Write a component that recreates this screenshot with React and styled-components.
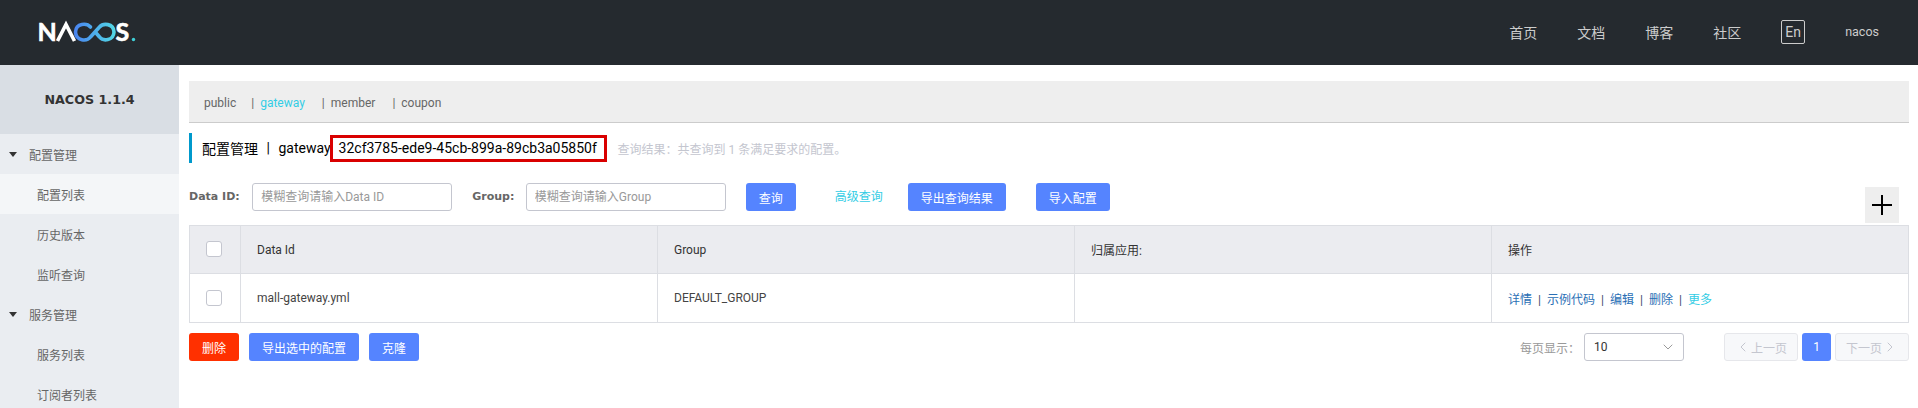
import React from 'react'
import styled, { createGlobalStyle } from 'styled-components'
import { ChevronDown, ChevronLeft, ChevronRight } from 'lucide-react'

const GlobalStyle = createGlobalStyle`
    html, body {
        margin: 0;
        padding: 0;
        height: 100%;
        overflow: hidden;
        background: #fff;
        font-family: Roboto, "Noto Sans CJK SC", sans-serif;
        font-size: 12px;
        color: #333;
    }
`

const Page = styled.div`
    display: flex;
    flex-direction: column;
    height: 100vh;
    overflow: hidden;
`

const Header = styled.header`
    display: flex;
    align-items: center;
    justify-content: space-between;
    flex: none;
    box-sizing: border-box;
    height: 65px;
    padding: 0 39px 2px 36px;
    background: #252a2f;
`

const Nav = styled.nav`
    display: flex;
    align-items: center;
    gap: 40px;
    color: #ccc;
    font-size: 14px;
`

const LangBox = styled.span`
    display: flex;
    align-items: center;
    justify-content: center;
    box-sizing: border-box;
    width: 24px;
    height: 24px;
    border: 1px solid #ccc;
    border-radius: 2px;
`

const UserName = styled.span`
    font-size: 12.5px;
`

const Body = styled.div`
    display: flex;
    flex: 1;
    min-height: 0;
`

const Sidebar = styled.aside`
    flex: none;
    width: 179px;
    background: #eaedf1;
`

const SideTitle = styled.div`
    display: flex;
    align-items: center;
    justify-content: center;
    height: 69px;
    background: #d9dee4;
    color: #333;
    font-family: "DejaVu Sans", sans-serif;
    font-size: 12.7px;
    font-weight: bold;
`

const SideItem = styled.div`
    display: flex;
    align-items: center;
    height: 40px;
    padding-left: ${(props) => (props.$group ? '9px' : '37px')};
    background: ${(props) => (props.$active ? '#f4f6f8' : 'transparent')};
    color: #666;
`

const Caret = styled.span`
    width: 0;
    height: 0;
    margin-right: 12px;
    border-left: 4.5px solid transparent;
    border-right: 4.5px solid transparent;
    border-top: 5px solid #333;
`

const Main = styled.main`
    flex: 1;
    min-width: 0;
    padding: 16px 9px 0 10px;
`

const TabBar = styled.div`
    display: flex;
    align-items: center;
    box-sizing: border-box;
    height: 42px;
    padding: 3px 0 0 15px;
    background: #eee;
    border-bottom: 1px solid #ccc;
    color: #666;
`

const Tab = styled.span`
    margin-right: ${(props) => props.$gap}px;
    color: ${(props) => (props.$active ? '#33cde5' : '#666')};
`

const TabSep = styled.span`
    margin-right: 6px;
    color: #666;
`

const TitleBar = styled.div`
    display: flex;
    align-items: center;
    box-sizing: border-box;
    height: 30px;
    margin-top: 10px;
    padding-left: 10px;
    border-left: 3px solid #09c;
    color: #000;
    font-size: 14px;
`

const TitleSep = styled.span`
    margin: 0 8.5px;
`

const RedBox = styled.span`
    display: flex;
    align-items: center;
    box-sizing: border-box;
    width: 277px;
    height: 27px;
    margin-left: -1px;
    padding-left: 6px;
    border: 3px solid #d90000;
`

const TitleNote = styled.span`
    margin-left: 11px;
    color: #c4c6cf;
    font-size: 12px;
`

const SearchRow = styled.div`
    display: flex;
    align-items: flex-start;
    height: 42px;
    margin-top: 20px;
    padding-right: 10px;
`

const FieldLabel = styled.label`
    margin-right: ${(props) => props.$gap}px;
    line-height: 28px;
    color: #666;
    font-family: "DejaVu Sans", sans-serif;
    font-weight: bold;
    font-size: 11px;
`

const SearchInput = styled.input`
    box-sizing: border-box;
    width: 200px;
    height: 28px;
    margin-right: 20px;
    padding: 0 8px;
    border: 1px solid #c4c6cf;
    border-radius: 3px;
    font: inherit;
    &::placeholder {
        color: #999;
        opacity: 1;
    }
`

const Button = styled.button`
    flex: none;
    width: ${(props) => props.$width}px;
    height: 28px;
    margin-right: ${(props) => props.$gap || 0}px;
    padding: 0;
    border: 0;
    border-radius: 3px;
    background: ${(props) => (props.$danger ? '#ff3000' : '#5584ff')};
    color: #fff;
    font: inherit;
`

const AdvancedLink = styled.a`
    margin: 0 25px 0 39px;
    line-height: 28px;
    color: #33cde5;
`

const PlusButton = styled.div`
    display: flex;
    align-items: center;
    justify-content: center;
    width: 34px;
    height: 36px;
    margin: 4px 0 0 auto;
    background: #eee;
`

const Table = styled.table`
    width: 100%;
    table-layout: fixed;
    border-collapse: collapse;
    border: 1px solid #dcdee3;
`

const HeadCell = styled.th`
    box-sizing: border-box;
    height: 48px;
    padding: 0 16px;
    background: #ebecf0;
    border-right: 1px solid #dcdee3;
    border-bottom: 1px solid #dcdee3;
    color: #333;
    font-weight: normal;
    text-align: left;
`

const Cell = styled.td`
    box-sizing: border-box;
    height: 49px;
    padding: 0 16px;
    border-right: 1px solid #dcdee3;
    color: #444;
`

const Check = styled.input`
    display: block;
    appearance: none;
    box-sizing: border-box;
    width: 16px;
    height: 16px;
    margin: -1px 0 0;
    background: #fff;
    border: 1px solid #c4c6cf;
    border-radius: 3px;
`

const ActionLink = styled.a`
    color: ${(props) => (props.$more ? '#33cde5' : '#2a6fb5')};
`

const ActionSep = styled.span`
    display: inline-block;
    width: 15px;
    text-align: center;
    color: #3d4a6b;
`

const FooterRow = styled.div`
    display: flex;
    align-items: center;
    margin-top: 10px;
`

const PageSize = styled.span`
    margin: 0 4px 0 auto;
    color: #999;
`

const SelectBox = styled.div`
    display: flex;
    align-items: center;
    justify-content: space-between;
    box-sizing: border-box;
    width: 100px;
    height: 28px;
    margin-right: 40px;
    padding: 0 7px 0 9px;
    border: 1px solid #c4c6cf;
    border-radius: 3px;
    color: #333;
`

const PageButton = styled.div`
    display: flex;
    align-items: center;
    justify-content: center;
    box-sizing: border-box;
    width: ${(props) => (props.$current ? '29px' : '74px')};
    height: 28px;
    margin-left: ${(props) => (props.$first ? 0 : '4px')};
    background: ${(props) => (props.$current ? '#5584ff' : '#f7f8fa')};
    border: ${(props) => (props.$current ? '0' : '1px solid #e6e7eb')};
    border-radius: 3px;
    color: ${(props) => (props.$current ? '#fff' : '#c4c6cf')};
`

const namespaces = [
    { name: 'public', gap: 15 },
    { name: 'gateway', gap: 17 },
    { name: 'member', gap: 17 },
    { name: 'coupon', gap: 0 },
]

const menu = [
    { label: '配置管理', group: true },
    { label: '配置列表', active: true },
    { label: '历史版本' },
    { label: '监听查询' },
    { label: '服务管理', group: true },
    { label: '服务列表' },
    { label: '订阅者列表' },
]

const actions = ['详情', '示例代码', '编辑', '删除']

function Logo() {
    return (
        <svg width="102" height="34" viewBox="0 -5 102 34" fill="none">
            <defs>
                <linearGradient id="loop" x1="0" y1="0" x2="1" y2="0">
                    <stop offset="0" stopColor="#4a86f0" />
                    <stop offset="1" stopColor="#52d6e6" />
                </linearGradient>
            </defs>
            <text x="1.5" y="21" fill="#fff" stroke="#fff" strokeWidth="0.6" fontFamily="Lato, sans-serif" fontWeight="700" fontSize="25">N</text>
            <path d="M21.5 21 L30 4.5 L38.5 21" stroke="#fff" strokeWidth="3.6" />
            <path
                d="M54.5 7 C51 3 40 2.5 39.5 12 C40 21.5 51 21.5 54.5 17 L63.5 7 C67 3 77.5 3 78 12 C77.5 21 67 21.5 63.5 17 L60.5 13.5"
                stroke="url(#loop)"
                strokeWidth="3.6"
                strokeLinecap="round"
            />
            <text x="79.5" y="21" fill="#fff" stroke="#fff" strokeWidth="0.6" fontFamily="Lato, sans-serif" fontWeight="700" fontSize="25">S</text>
            <circle cx="97.5" cy="19.5" r="1.7" fill="#3fd0d8" />
        </svg>
    )
}

function PlusIcon() {
    return (
        <svg width="22" height="22" viewBox="0 0 22 22">
            <path d="M11 1 V21 M1 11 H21" stroke="#000" strokeWidth="2" />
        </svg>
    )
}

export default function App() {
    return (
        <Page>
            <GlobalStyle />
            <Header>
                <Logo />
                <Nav>
                    <span>首页</span>
                    <span>文档</span>
                    <span>博客</span>
                    <span>社区</span>
                    <LangBox>En</LangBox>
                    <UserName>nacos</UserName>
                </Nav>
            </Header>
            <Body>
                <Sidebar>
                    <SideTitle>NACOS 1.1.4</SideTitle>
                    {menu.map((item) => (
                        <SideItem key={item.label} $group={item.group} $active={item.active}>
                            {item.group && <Caret />}
                            {item.label}
                        </SideItem>
                    ))}
                </Sidebar>
                <Main>
                    <TabBar>
                        {namespaces.map((ns, index) => (
                            <React.Fragment key={ns.name}>
                                {index > 0 && <TabSep>|</TabSep>}
                                <Tab $active={ns.name === 'gateway'} $gap={ns.gap}>{ns.name}</Tab>
                            </React.Fragment>
                        ))}
                    </TabBar>
                    <TitleBar>
                        配置管理<TitleSep>|</TitleSep>gateway
                        <RedBox>32cf3785-ede9-45cb-899a-89cb3a05850f</RedBox>
                        <TitleNote>查询结果：共查询到 1 条满足要求的配置。</TitleNote>
                    </TitleBar>
                    <SearchRow>
                        <FieldLabel $gap={12.5}>Data ID:</FieldLabel>
                        <SearchInput placeholder="模糊查询请输入Data ID" />
                        <FieldLabel $gap={11.5}>Group:</FieldLabel>
                        <SearchInput placeholder="模糊查询请输入Group" />
                        <Button $width={50}>查询</Button>
                        <AdvancedLink>高级查询</AdvancedLink>
                        <Button $width={98} $gap={30}>导出查询结果</Button>
                        <Button $width={74}>导入配置</Button>
                        <PlusButton><PlusIcon /></PlusButton>
                    </SearchRow>
                    <Table>
                        <colgroup>
                            <col width="51" />
                            <col width="417" />
                            <col width="417" />
                            <col width="417" />
                            <col />
                        </colgroup>
                        <thead>
                            <tr>
                                <HeadCell><Check type="checkbox" /></HeadCell>
                                <HeadCell>Data Id</HeadCell>
                                <HeadCell>Group</HeadCell>
                                <HeadCell>归属应用:</HeadCell>
                                <HeadCell>操作</HeadCell>
                            </tr>
                        </thead>
                        <tbody>
                            <tr>
                                <Cell><Check type="checkbox" /></Cell>
                                <Cell>mall-gateway.yml</Cell>
                                <Cell>DEFAULT_GROUP</Cell>
                                <Cell></Cell>
                                <Cell>
                                    {actions.map((action) => (
                                        <React.Fragment key={action}>
                                            <ActionLink>{action}</ActionLink>
                                            <ActionSep>|</ActionSep>
                                        </React.Fragment>
                                    ))}
                                    <ActionLink $more>更多</ActionLink>
                                </Cell>
                            </tr>
                        </tbody>
                    </Table>
                    <FooterRow>
                        <Button $danger $width={50} $gap={10}>删除</Button>
                        <Button $width={110} $gap={10}>导出选中的配置</Button>
                        <Button $width={50}>克隆</Button>
                        <PageSize>每页显示：</PageSize>
                        <SelectBox>
                            10
                            <ChevronDown size={16} strokeWidth={1} color="#666" />
                        </SelectBox>
                        <PageButton $first>
                            <ChevronLeft size={16} strokeWidth={1.5} />
                            上一页
                        </PageButton>
                        <PageButton $current>1</PageButton>
                        <PageButton>
                            下一页
                            <ChevronRight size={16} strokeWidth={1.5} />
                        </PageButton>
                    </FooterRow>
                </Main>
            </Body>
        </Page>
    )
}
